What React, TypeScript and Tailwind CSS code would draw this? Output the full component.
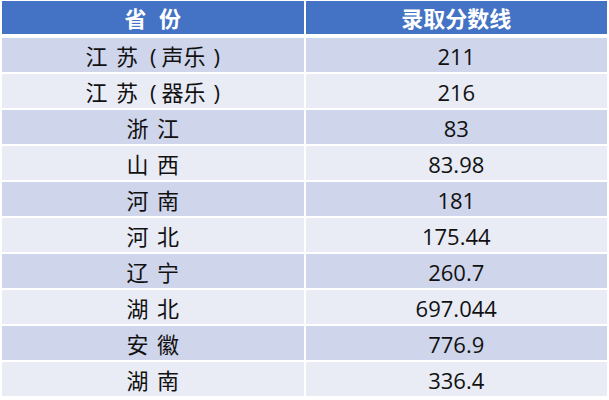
const ROWS = [
  { prov: '江 苏', sub: '声乐', score: '211' },
  { prov: '江 苏', sub: '器乐', score: '216' },
  { prov: '浙 江', score: '83' },
  { prov: '山 西', score: '83.98' },
  { prov: '河 南', score: '181' },
  { prov: '河 北', score: '175.44' },
  { prov: '辽 宁', score: '260.7' },
  { prov: '湖 北', score: '697.044' },
  { prov: '安 徽', score: '776.9' },
  { prov: '湖 南', score: '336.4' },
]

const font = { fontFamily: '"Open Sans", "Noto Sans CJK SC", sans-serif' }

export default function App() {
  return (
    <div className="w-[609px] h-[400px] bg-white pt-[1px] px-[2px] overflow-hidden" style={font}>
      <div className="grid grid-cols-2 gap-[2px] h-[33px] text-white font-bold text-[22px] leading-none">
        <div className="bg-[#4472c4] flex items-center justify-center whitespace-pre [word-spacing:7px]">省 份</div>
        <div className="bg-[#4472c4] flex items-center justify-center">录取分数线</div>
      </div>
      <div className="mt-[4px] flex flex-col gap-[2px]">
        {ROWS.map((r, i) => (
          <div key={i} className="grid grid-cols-2 gap-[2px] h-[34px] text-[22px] leading-none text-[#111]">
            <div className={`${i % 2 === 0 ? 'bg-[#cfd5ea]' : 'bg-[#e9ebf5]'} flex items-center justify-center whitespace-pre [word-spacing:3px] pt-[2px]`}>
              {r.prov}
              {r.sub && (
                <>
                  <span className="ml-[12px] mr-[5px]">(</span>
                  {r.sub}
                  <span className="ml-[8px]">)</span>
                </>
              )}
            </div>
            <div className={`${i % 2 === 0 ? 'bg-[#cfd5ea]' : 'bg-[#e9ebf5]'} flex items-center justify-center pt-[2px]`}>
              {r.score}
            </div>
          </div>
        ))}
      </div>
    </div>
  )
}
